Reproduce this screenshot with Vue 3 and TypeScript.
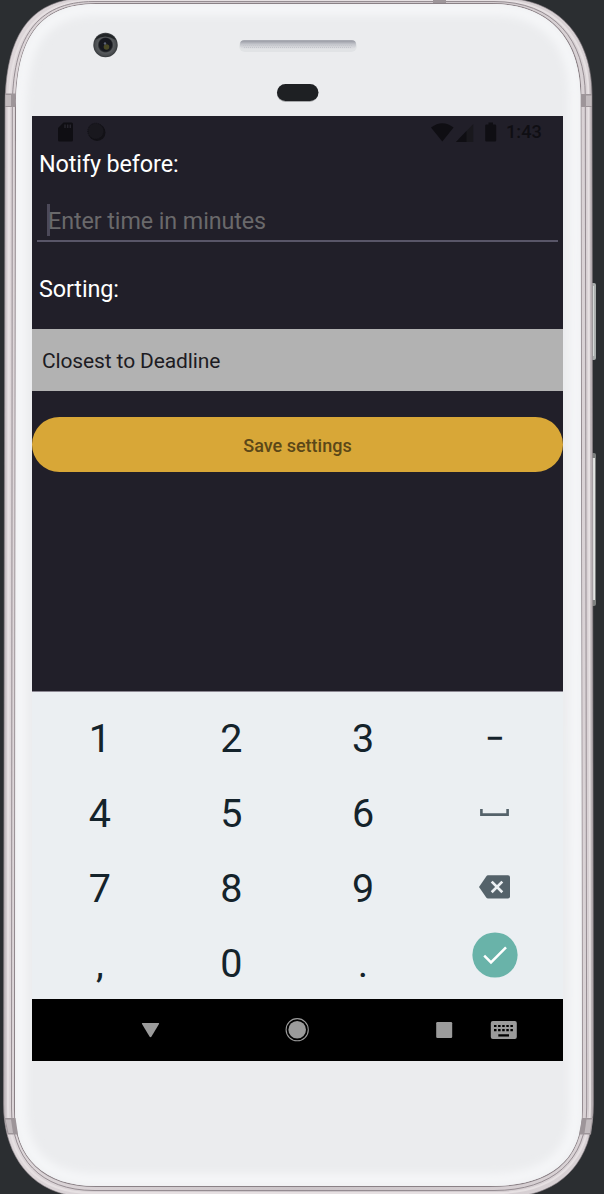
<script setup lang="ts">
import { ref } from 'vue'

type KeyKind = 'digit' | 'minus' | 'space' | 'delete' | 'done'
interface Key { label: string; kind: KeyKind }

const minutes = ref('')
const sorting = ref('Closest to Deadline')

const digit = (label: string): Key => ({ label, kind: 'digit' })
const keys: Key[] = [
  digit('1'), digit('2'), digit('3'), { label: '−', kind: 'minus' },
  digit('4'), digit('5'), digit('6'), { label: '', kind: 'space' },
  digit('7'), digit('8'), digit('9'), { label: '', kind: 'delete' },
  digit(','), digit('0'), digit('.'), { label: '', kind: 'done' },
]
</script>

<template>
  <div class="stage">
    <svg class="shell" width="604" height="1194" viewBox="0 0 604 1194" aria-hidden="true">
      <defs>
        <linearGradient id="rim" x1="0" x2="1" y1="0" y2="0">
          <stop offset="0" stop-color="#b3abaf" />
          <stop offset="0.007" stop-color="#ddd6d9" />
          <stop offset="0.5" stop-color="#cbc4c8" />
          <stop offset="0.99" stop-color="#d9d2d5" />
          <stop offset="1" stop-color="#aaa2a6" />
        </linearGradient>
        <linearGradient id="grille" x1="0" x2="0" y1="0" y2="1">
          <stop offset="0" stop-color="#93959f" />
          <stop offset="0.45" stop-color="#c3c5cb" />
          <stop offset="1" stop-color="#e1e2e5" />
        </linearGradient>
        <radialGradient id="lens">
          <stop offset="0" stop-color="#34351f" />
          <stop offset="0.4" stop-color="#15171f" />
          <stop offset="0.55" stop-color="#24272a" />
          <stop offset="0.65" stop-color="#585b5e" />
          <stop offset="0.85" stop-color="#4a4d50" />
          <stop offset="1" stop-color="#35383b" />
        </radialGradient>
        <filter id="soft" x="-5%" y="-5%" width="110%" height="110%">
          <feGaussianBlur stdDeviation="4" />
        </filter>
        <clipPath id="face-clip">
          <path d="M16 108C16 40 38 4 96 4H492C552 4 580 42 580.5 95L582 1110C582 1160 551 1186 490 1186H96C44 1186 15 1158 15 1110Z" />
        </clipPath>
      </defs>

      <rect x="590" y="283" width="6" height="77" rx="2" fill="#a9adac" />
      <path d="M593.5 286V356" stroke="#d5d9d8" stroke-width="1.2" />
      <rect x="590" y="453" width="6" height="153" rx="2" fill="#7d807f" />
      <path d="M593.5 458V600" stroke="#e2e4e2" stroke-width="3" />

      <path fill="url(#rim)" stroke="#8d8589" stroke-width="0.6"
        d="M5 108C5 38 28 -2 88 -2H500C560 -2 592 38 592 96L593.5 1104C593.5 1162 560 1197 505 1197H88C34 1197 3.5 1158 3.5 1104Z" />
      <g fill="none">
        <path stroke="#e6e0e2" stroke-width="2"
          d="M9 108C9 40 33 0.5 92 0.5H496C556 0.5 588.5 40 588.5 96L590 1106C590 1160 556 1193 496 1193H92C36 1193 8 1158 8 1106Z" />
        <path stroke="#8d858a" stroke-width="0.9"
          d="M12.3 108C12.3 40 35 1.5 94 1.5H494C554 1.5 585.3 40 585.3 96L586.7 1108C586.7 1160 553 1190.5 494 1190.5H94C40 1190.5 11.5 1158 11.5 1108Z" />
        <path stroke="#8a8186" stroke-width="1.1"
          d="M15.5 108C15.5 40 38 3.5 96 3.5H492C552 3.5 580.8 42 580.8 95L582.3 1110C582.3 1160 551 1186.5 490 1186.5H96C44 1186.5 14.5 1158 14.5 1110Z" />
      </g>
      <g clip-path="url(#face-clip)">
        <rect width="604" height="1194" fill="#ebecee" />
        <path fill="none" stroke="#f5f6f8" stroke-width="13" filter="url(#soft)"
          d="M20 108C20 44 42 9 96 9H492C548 9 575 44 575.5 95L576 1110C576 1155 547 1180 490 1180H96C48 1180 20 1155 20 1110Z" />
      </g>

      <g fill="#9d9599">
        <path d="M5 93.5H15.3V107H5Z" />
        <path d="M581 94H592V107H581Z" />
        <path d="M4.5 1118H15.5L18 1134.5H7.5Z" />
        <path d="M582 1118H593L591 1134.5H579Z" />
        <path d="M433 0H446V3H433Z" />
      </g>
      <g fill="#c1babd">
        <path d="M5.5 95H11V106H5.5Z" />
        <path d="M586 95.5H591.5V106H586Z" />
        <path d="M5.5 1119.5H11L13 1133H8.5Z" />
        <path d="M586.5 1119.5H592L590 1133H584.5Z" />
      </g>

      <circle cx="105.5" cy="45" r="12.2" fill="url(#lens)" />
      <path d="M95 40A12 12 0 0 1 116 40Q105 33 95 40Z" fill="#222527" />
      <circle cx="105.5" cy="44.5" r="6.5" fill="#16181f" />
      <circle cx="106.5" cy="47" r="2.8" fill="#4a4926" />
      <circle cx="105" cy="43.5" r="1.2" fill="#5d6375" />

      <rect x="239" y="40" width="118" height="12" rx="6" fill="#e1e3e5" />
      <rect x="240" y="40.3" width="116" height="8.7" rx="4" fill="url(#grille)" />
      <path d="M243 45.5H353M244 47.5H352" stroke="#c4c6cb" stroke-width="1" stroke-dasharray="1 1" />
      <rect x="277" y="85" width="41" height="17" rx="8.5" fill="#a5a7a9" />
      <rect x="277" y="84" width="41.5" height="17" rx="8.5" fill="#1e2023" />
    </svg>

    <main class="screen">
      <header class="status">
        <svg width="16" height="20" viewBox="0 0 16 20">
          <path d="M5.5 0.5H13.5Q15 0.5 15 2V18Q15 19.5 13.5 19.5H1.5Q0 19.5 0 18V6Z" fill="#0f0e13" />
          <path d="M7 2.5V6M9.7 2.5V6M12.3 2.5V6" stroke="#26252d" stroke-width="1.5" />
        </svg>
        <svg class="sync" width="19" height="20" viewBox="0 0 19 20">
          <circle cx="10" cy="10.5" r="8.5" fill="#121116" />
          <circle cx="8.8" cy="9.2" r="8" fill="#19181e" stroke="#121116" stroke-dasharray="1 1" />
        </svg>
        <span class="spacer"></span>
        <svg class="wifi" width="23" height="19" viewBox="0 0 23 19">
          <path d="M0 4.5Q11.3 -4 22.6 4.5L11.3 18.5Z" fill="#0f0e13" />
        </svg>
        <svg class="signal" width="18" height="19" viewBox="0 0 18 19">
          <path d="M17.3 1V19H0Z" fill="#19181d" />
          <path d="M10.5 8V19H0Z" fill="#0f0e13" />
        </svg>
        <svg class="battery" width="12" height="20" viewBox="0 0 12 20">
          <path d="M3.5 0.5H8V2.5H10Q11.2 2.5 11.2 3.7V18.3Q11.2 19.5 10 19.5H1.4Q0.2 19.5 0.2 18.3V3.7Q0.2 2.5 1.4 2.5H3.5Z" fill="#0f0e13" />
        </svg>
        <time>1:43</time>
      </header>

      <h2 class="heading">Notify before:</h2>
      <div class="field">
        <span class="caret"></span>
        <span class="hint">{{ minutes || 'Enter time in minutes' }}</span>
      </div>
      <h2 class="heading sort-heading">Sorting:</h2>
      <div class="select"><span>{{ sorting }}</span></div>
      <button class="save" type="button"><span>Save settings</span></button>

      <section class="keypad">
        <div v-for="(key, i) in keys" :key="i" class="key" :class="key.kind">
          <span v-if="key.label">{{ key.label }}</span>
          <svg v-else-if="key.kind === 'space'" width="29" height="7" viewBox="0 0 29 7">
            <path d="M1.4 0V5.6H27.6V0" fill="none" stroke="#54626a" stroke-width="2.6" />
          </svg>
          <svg v-else-if="key.kind === 'delete'" width="31" height="24" viewBox="0 0 31 24">
            <path d="M9 0.3H29Q31 0.3 31 2.3V21.5Q31 23.5 29 23.5H9Q8 23.5 7.2 22.4L0 12L7.2 1.4Q8 0.3 9 0.3Z" fill="#54626a" />
            <path d="M12.7 6.6L23.3 17.2M23.3 6.6L12.7 17.2" stroke="#ebeff2" stroke-width="2.7" />
          </svg>
          <svg v-else width="46" height="46" viewBox="0 0 46 46">
            <circle cx="23" cy="23" r="22.6" fill="#69b3a9" />
            <path d="M12.2 23.7L19 30.4L34 15.4" fill="none" stroke="#fff" stroke-width="2.5" />
          </svg>
        </div>
      </section>

      <nav class="navbar">
        <svg width="531" height="62" viewBox="0 0 531 62" fill="#9b9b9b">
          <path d="M110.5 24H126.5Q127.5 24 127 25L119.5 37.5Q118.5 39 117.5 37.5L110 25Q109.5 24 110.5 24Z" />
          <circle cx="265.2" cy="30.7" r="8.8" />
          <circle cx="265.2" cy="30.7" r="11.1" fill="none" stroke="#9b9b9b" stroke-width="1.1" />
          <rect x="404.2" y="23" width="16" height="16" rx="1.2" />
          <rect x="458.8" y="22" width="26" height="18" rx="2" />
          <path d="M462 27H481M462 31.2H481" stroke="#000" stroke-width="2.2" stroke-dasharray="2.5 1.6" />
          <path d="M466.3 36.4H477" stroke="#000" stroke-width="2.3" />
        </svg>
      </nav>
    </main>
  </div>
</template>

<style>
body { margin: 0; background: #2b2e31; }
</style>

<style scoped>
.stage {
  position: relative;
  box-sizing: border-box;
  width: 604px;
  height: 1194px;
  padding: 116px 41px 133px 32px;
  overflow: hidden;
  background: #2b2e31;
  font-family: Roboto, "Liberation Sans", sans-serif;
}
.shell { position: absolute; inset: 0; }
svg { display: block; flex: none; }
.screen {
  position: relative;
  display: flex;
  flex-direction: column;
  width: 531px;
  height: 945px;
  background: #211f29;
}
.status {
  display: flex;
  align-items: center;
  box-sizing: border-box;
  height: 31px;
  padding: 1px 21px 0 26px;
  color: #0f0e13;
}
.sync { margin-left: 13px; }
.spacer { flex: 1; }
.signal { margin-left: 2px; }
.battery { margin: 0 9px 0 11px; }
time { width: 36px; font-size: 18.2px; font-weight: 500; line-height: 20px; white-space: nowrap; }
.heading {
  margin: 0;
  padding-left: 7px;
  font-size: 23.4px;
  font-weight: 400;
  line-height: 34px;
  letter-spacing: -0.12px;
  color: #fff;
}
.field {
  display: flex;
  align-items: center;
  box-sizing: border-box;
  height: 41px;
  margin: 20px 5px 0;
  padding: 0 0 1px 10px;
  border-bottom: 2px solid #595668;
}
.caret { width: 3px; height: 32px; margin-right: -2px; background: #4c4959; }
.hint {
  padding-top: 2px;
  font-size: 23.3px;
  line-height: 34px;
  letter-spacing: -0.08px;
  color: #6a696b;
}
.sort-heading { margin-top: 30px; }
.select {
  display: flex;
  align-items: center;
  box-sizing: border-box;
  height: 62px;
  margin-top: 23px;
  padding: 2px 10px 0;
  background: #b2b2b2;
  color: #1d1c23;
  font-size: 21px;
  letter-spacing: -0.13px;
}
.save {
  display: flex;
  align-items: center;
  justify-content: center;
  height: 55px;
  margin: 26px 0 0;
  padding: 1px 0 0;
  border: 0;
  border-radius: 28px;
  background: #d8a737;
  color: #5b4718;
  font: 500 18px Roboto, sans-serif;
}
.keypad {
  display: grid;
  grid-template-columns: repeat(4, 131.6px);
  grid-auto-rows: 75px;
  box-sizing: border-box;
  height: 308px;
  margin-top: auto;
  padding: 9px 0 0 2px;
  overflow: hidden;
  border-top: 1px solid #8b8792;
  background: #ebeff2;
  color: #14232b;
}
.key { display: flex; align-items: center; justify-content: center; font-size: 39.5px; line-height: 75px; }
.minus { font-size: 34px; font-weight: 500; }
.space { padding-bottom: 3px; }
.delete { padding-bottom: 4px; }
.done { padding-bottom: 18px; box-sizing: border-box; }
.navbar { height: 62px; background: #000; }
</style>
